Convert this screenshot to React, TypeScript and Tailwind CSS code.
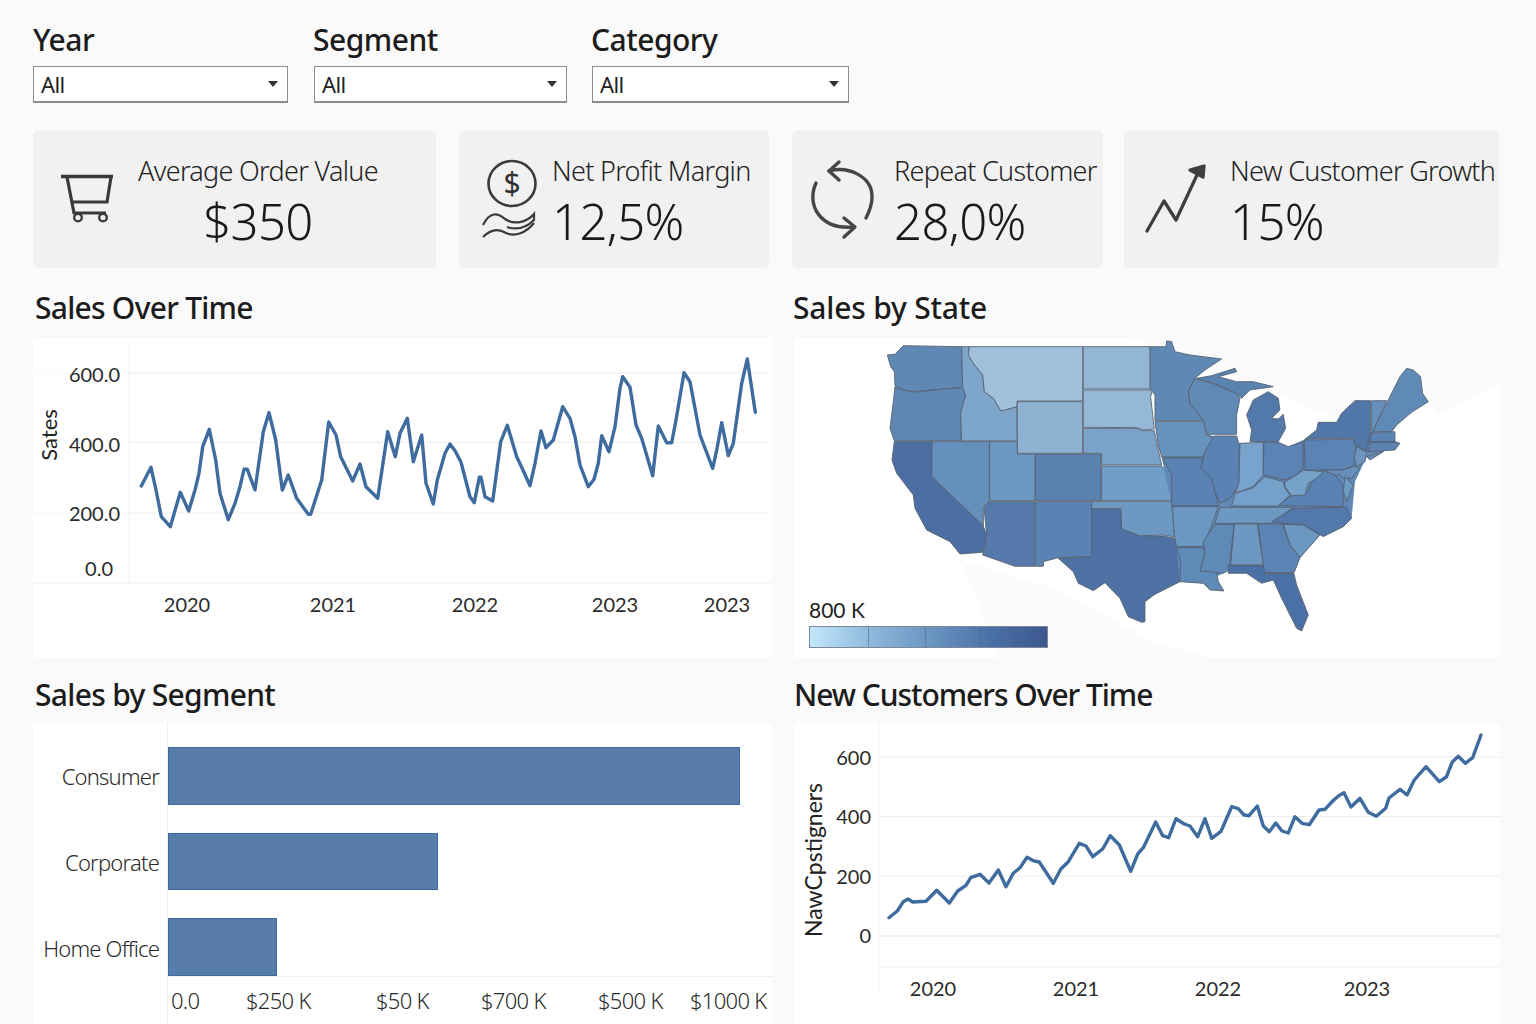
import React from "react";

const toPts = (raw: number[][], ox: number, oy: number) =>
  raw.map(([x, y]) => `${(x / 3 + ox).toFixed(1)},${(y / 3 + oy).toFixed(1)}`).join(" ");

const salesA = [[424,468],[453,412],[468,480],[484,560],[511,590],[541,487],[566,543],[585,480],[597,430],[608,350],[628,298],[647,390],[660,490],[685,569],[705,520],[720,470],[732,418],[742,418],[765,480],[790,305],[807,248],[827,330],[847,480],[865,435],[890,505],[925,553],[932,553],[965,450],[986,276],[1008,315],[1022,380],[1058,453],[1080,402],[1098,470],[1133,505],[1163,305],[1186,380]];
const salesB = [[0,310],[22,265],[40,395],[65,315],[78,460],[100,522],[112,450],[135,370],[150,342],[165,362],[183,397],[210,500],[223,518],[238,442],[243,442],[255,500],[278,513],[302,335],[322,286],[350,380],[365,412],[390,467],[405,400],[423,303],[438,353],[460,330],[488,230],[510,265],[525,320],[540,405],[565,470],[582,448],[595,400],[605,317],[627,365],[645,290],[660,175],[668,140],[690,172],[708,285],[725,325],[758,437],[775,288],[800,338],[815,338],[828,270],[852,128],[870,155],[900,315],[938,415],[950,360],[965,278],[985,377],[1000,340],[1025,160],[1042,87],[1066,247]];
const custA = [[297,593],[322,573],[340,545],[354,537],[368,546],[408,544],[440,511],[478,549],[503,513],[528,496],[542,473],[570,463],[597,489],[625,450],[648,500],[670,460],[690,443],[711,412],[732,423],[748,426],[790,490],[812,448],[835,425],[868,370],[888,378],[908,410],[938,387],[961,347],[988,375],[1022,454],[1043,402],[1060,383],[1097,306]];
const custB = [[38,347],[56,353],[78,296],[103,312],[120,318],[143,350],[165,296],[185,355],[213,334],[245,260],[265,266],[282,285],[297,287],[322,258],[340,318],[358,335],[377,309],[396,333],[415,339],[435,290],[456,310],[478,314],[507,270],[525,268],[548,243],[566,227],[582,218],[603,261],[630,235],[655,277],[679,289],[707,265],[717,234],[750,208],[771,225],[793,180],[828,140],[868,185],[889,171],[907,126],[925,109],[946,130],[968,113],[993,45]];

const westStates: [string, string][] = [
  ["#5f88b5","262,60 285,58 310,32 485,35 488,157 400,165 340,170 310,165 285,152 283,110 272,95"],
  ["#5f87b3","285,155 310,165 340,172 400,165 488,157 497,180 482,235 484,318 283,318 270,280 280,200"],
  ["#7ea5ca","485,35 508,35 505,60 520,85 548,120 553,170 580,190 603,228 650,215 652,318 485,318 482,235 497,180 488,157"],
  ["#a0c0dc","508,35 848,35 848,198 652,198 650,215 603,228 580,190 553,170 548,120 520,85 505,60"],
  ["#8fb2d3","652,200 848,200 848,355 652,355"],
  ["#93b6d5","850,35 1050,35 1058,162 850,162"],
  ["#95b8d6","850,165 1058,165 1052,185 1063,282 1030,285 1010,278 850,277"],
  ["#7ba3c9","850,280 1010,280 1030,287 1063,287 1085,390 905,390 905,355 850,355"],
  ["#719ec6","905,393 1085,393 1113,420 1113,497 905,497"],
  ["#5a82b0","706,357 903,357 903,497 706,497"],
  ["#6b97c0","568,320 652,320 652,357 705,357 705,497 568,497"],
  ["#6490bb","395,320 568,320 568,497 550,517 550,573 395,425"],
  ["#4b6fa3","283,320 395,320 395,425 550,573 560,600 548,652 480,657 450,620 380,585 345,520 340,480 290,415 276,375"],
  ["#5579aa","552,517 568,500 705,500 705,694 645,694 548,660 560,600"],
  ["#5a82b2","707,500 875,500 875,665 775,668 730,680 730,694 707,694"],
  ["#6c98c1","875,500 1115,500 1124,606 1090,600 1020,603 965,582 962,522 875,522"],
  ["#4e71a3","875,522 962,522 965,582 1020,603 1090,603 1124,610 1140,680 1140,740 1065,778 1035,800 1035,860 1025,862 985,845 960,790 915,743 880,767 835,745 820,710 775,670 875,665"],
];

const eastLand = "45,260 200,298 300,325 415,322 445,335 495,313 645,330 692,290 770,320 780,325 730,350 680,365 645,440 635,550 610,575 540,600 480,668 462,716 372,716 265,692 250,715 190,745 120,740 95,512 65,366";

const eastStates: [string, string][] = [
  ["#5f88b5","30,35 78,35 80,18 95,20 105,50 150,60 245,72 195,105 165,130 145,170 150,205 190,257 45,257 45,180 30,160"],
  ["#6792bd","45,260 192,260 200,300 222,310 195,350 190,366 65,366 55,330"],
  ["#5a82b2","68,369 190,369 183,400 215,430 225,470 235,512 95,512 95,420"],
  ["#6b98c2","97,515 235,515 215,570 190,635 110,635 103,600"],
  ["#5f8bb9","110,638 190,638 195,655 180,708 230,710 235,740 252,768 210,765 190,745 120,740 122,680"],
  ["#6089b4","165,130 220,145 290,175 300,190 290,240 290,298 200,298 190,255 150,205 145,170"],
  ["#5a83b0","170,130 215,122 285,100 290,110 235,125 290,140 340,140 400,155 330,165 305,190 290,175 220,145"],
  ["#5279aa","385,170 415,190 420,225 395,250 415,252 430,238 437,280 415,320 330,320 335,285 320,240 340,195"],
  ["#5a82b2","222,303 290,303 298,330 297,450 270,490 240,505 225,470 215,430 183,400 195,350"],
  ["#78a3cd","300,325 370,322 370,420 340,455 285,475 297,445"],
  ["#5b83b3","372,322 415,322 445,335 490,320 490,400 470,420 435,435 370,420"],
  ["#75a0c9","285,475 340,458 375,425 430,440 435,460 450,480 415,513 275,513"],
  ["#6d98c1","240,517 460,517 395,565 225,565"],
  ["#5279aa","460,520 620,517 635,550 610,575 550,605 490,570 430,565 395,560"],
  ["#5a82b2","415,512 450,485 505,470 515,440 550,405 585,420 610,450 610,515"],
  ["#76a2c9","435,455 435,440 470,420 490,405 550,410 530,430 505,445 495,480 455,482"],
  ["#6b97c1","430,568 490,570 540,600 480,668 450,630"],
  ["#5b83b3","355,567 428,567 450,630 480,668 462,713 372,713"],
  ["#6d98c2","283,567 352,567 370,690 272,690"],
  ["#5f8ab8","225,568 282,568 268,705 250,715 180,708 195,655 190,620"],
  ["#4b70a6","265,692 370,692 374,716 462,716 470,750 505,840 485,888 470,880 425,790 400,735 365,745 320,715 265,715"],
  ["#5b83b3","493,315 640,313 648,335 645,390 610,405 495,405"],
  ["#5177a9","645,197 692,197 692,290 680,350 645,330 640,310 495,313 530,285 535,262 590,262 605,235"],
  ["#6c96c0","650,335 680,352 675,380 650,395 643,370"],
  ["#6590bd","550,405 610,405 645,392 660,400 635,430 610,430 600,420 585,420"],
  ["#6e9ac4","615,425 640,450 620,500 610,470"],
  ["#6490bb","695,197 740,197 700,290 695,290"],
  ["#5f89b6","745,195 780,125 800,100 820,105 842,125 848,175 865,200 815,232 770,270 755,290 698,290"],
  ["#5b83b3","695,293 765,290 765,320 690,320"],
  ["#5b83b3","690,322 770,322 780,325 765,345 685,350"],
  ["#5f89b6","680,365 730,350 690,375"],
];

function Filter({ label, width, labelClass }: { label: string; width: string; labelClass?: string }) {
  return (
    <div className={width}>
      <div className={`h-[40px] text-[30px] font-medium leading-[40px] tracking-[-0.5px] text-[#1c1c1c] ${labelClass ?? ""}`}>{label}</div>
      <div className="mt-[6px] flex h-[37px] items-center justify-between border border-b-2 border-[#8c8c8c] bg-white pl-[7px] pr-[9px] text-[22px] leading-none tracking-[-0.6px] text-[#222]">
        <span>All</span>
        <span className="h-0 w-0 border-x-[5px] border-t-[6px] border-x-transparent border-t-[#333]" />
      </div>
    </div>
  );
}

function Kpi({ width, pad, gap, icon, label, value, center }: { width: string; pad: string; gap: string; icon: React.ReactNode; label: string; value: string; center?: boolean }) {
  return (
    <div className={`flex h-[138px] items-center rounded-[6px] bg-[#f1f1f1] ${width} ${pad} ${gap}`}>
      {icon}
      <div className={`mt-[6px] flex flex-col ${center ? "items-center" : "items-start"}`}>
        <div className="text-[27px] font-light leading-[34px] tracking-[-0.7px] whitespace-nowrap text-[#222]">{label}</div>
        <div className="mt-[4px] text-[49px] font-light leading-[58px] tracking-[-0.6px] text-[#1a1a1a]">{value}</div>
      </div>
    </div>
  );
}

function Section({ title, titleClass, top, children, panelHeight }: { title: string; titleClass: string; top: string; panelHeight: string; children: React.ReactNode }) {
  return (
    <section>
      <h2 className={`h-[40px] text-[30px] font-medium leading-[38px] whitespace-nowrap text-[#1c1c1c] ${top} ${titleClass}`}>{title}</h2>
      <div className={`relative overflow-hidden bg-white ${panelHeight}`}>{children}</div>
    </section>
  );
}

const tick = { fontFamily: "Lato, sans-serif", fontSize: 20, fill: "#2b2b2b" };

function SalesChart() {
  return (
    <svg viewBox="33 338 739 320" className="block h-full w-full">
      {[373, 513].map((y) => <line key={y} x1="33" x2="129" y1={y} y2={y} stroke="#f7f7f7" />)}
      {[373, 442.5, 513].map((y) => <line key={y} x1="129" x2="770" y1={y} y2={y} stroke="#eeeeee" />)}
      <line x1="33" x2="772" y1="583" y2="583" stroke="#eeeeee" />
      <line x1="129" x2="129" y1="345" y2="583" stroke="#f2f2f2" />
      {[["600.0", 120, 382], ["400.0", 120, 452], ["200.0", 120, 521], ["0.0", 113, 576]].map(([t, x, y]) => (
        <text key={t as string} x={x as number} y={y as number} textAnchor="end" style={tick}>{t}</text>
      ))}
      {[["2020", 187], ["2021", 333], ["2022", 475], ["2023", 615], ["2023", 727]].map(([t, x], i) => (
        <text key={i} x={x as number} y={612} textAnchor="middle" style={tick}>{t}</text>
      ))}
      <text transform="translate(57 435) rotate(-90)" textAnchor="middle" style={{ ...tick, fontSize: 22, fill: "#222" }}>Sates</text>
      <polyline points={`${toPts(salesA, 0, 330)} ${toPts(salesB, 400, 330)}`} fill="none" stroke="#3f6c9f" strokeWidth="3.4" strokeLinejoin="round" strokeLinecap="round" />
    </svg>
  );
}

function CustomersChart() {
  return (
    <svg viewBox="794 723 706 301" className="block h-full w-full">
      {[757, 816.5, 876, 967].map((y) => <line key={y} x1="879" x2="1500" y1={y} y2={y} stroke="#eeeeee" />)}
      <line x1="879" x2="1500" y1="936" y2="936" stroke="#f0f0f0" strokeWidth="2" />
      <line x1="879" x2="879" y1="723" y2="994" stroke="#f2f2f2" />
      {[["600", 765], ["400", 824], ["200", 884], ["0", 943]].map(([t, y]) => (
        <text key={t as string} x={871} y={y as number} textAnchor="end" style={tick}>{t}</text>
      ))}
      {[["2020", 933], ["2021", 1076], ["2022", 1218], ["2023", 1367]].map(([t, x]) => (
        <text key={t as string} x={x as number} y={996} textAnchor="middle" style={tick}>{t}</text>
      ))}
      <text transform="translate(822 860) rotate(-90)" textAnchor="middle" style={{ ...tick, fontSize: 23, fill: "#222" }}>NawCpstigners</text>
      <polyline points={`${toPts(custA, 790, 720)} ${toPts(custB, 1150, 720)}`} fill="none" stroke="#3f6c9f" strokeWidth="3.4" strokeLinejoin="round" strokeLinecap="round" />
    </svg>
  );
}

function UsMap() {
  const line = { stroke: "#565f6e", strokeWidth: 2.6, strokeLinejoin: "round" as const };
  return (
    <svg viewBox="794 338 706 320" className="block h-full w-full">
      <polygon points="1130,338 1500,338 1500,385 1440,415 1420,395 1340,420 1290,400 1230,375" fill="#fbfbfb" />
      <polygon points="960,560 1060,590 1150,640 1210,658 1000,658" fill="#fbfbfb" />
      <g transform="translate(800 335) scale(0.3333)">
        {westStates.map(([c, p], i) => <polygon key={i} points={p} fill={c} {...line} />)}
        <g transform="translate(1020 0)">
          <polygon points={eastLand} fill="#6189b6" />
          {eastStates.map(([c, p], i) => <polygon key={i} points={p} fill={c} {...line} />)}
        </g>
      </g>
    </svg>
  );
}

function CartIcon() {
  return (
    <svg viewBox="60 174 56 54" className="h-[54px] w-[56px] shrink-0" fill="none" stroke="#3a3a3a">
      <path d="M61 178.5H113" strokeWidth="3.4" />
      <path d="M67 179L74 215H106M111 179L107 204H71" strokeWidth="3.2" />
      <circle cx="78" cy="219.5" r="3.8" strokeWidth="2.4" />
      <circle cx="103" cy="219.5" r="3.8" strokeWidth="2.4" />
    </svg>
  );
}

function CoinIcon() {
  return (
    <svg viewBox="481 158 56 84" className="h-[84px] w-[56px] shrink-0" fill="none" stroke="#3a3a3a">
      <ellipse cx="512" cy="184.5" rx="23.5" ry="22.5" strokeWidth="2.6" />
      <text x="512" y="195" textAnchor="middle" stroke="none" fill="#333" style={{ fontFamily: "Noto Sans, sans-serif", fontSize: 30 }}>$</text>
      <path d="M483 226C490 212 498 214 505 220C514 226 526 224 534 215L534 221C526 229 516 231 507 228" strokeWidth="2.2" />
      <path d="M483 238C490 231 498 229 506 234C515 238 526 234 534 224" strokeWidth="2.2" />
    </svg>
  );
}

function RepeatIcon() {
  return (
    <svg viewBox="808 158 68 82" className="h-[82px] w-[68px] shrink-0" fill="none" stroke="#464646" strokeWidth="3.4" strokeLinecap="round" strokeLinejoin="round">
      <path d="M829 171C848 166 873 176 872 198C872 205 869 212 866 218" />
      <path d="M839 162L829 171L839 180" />
      <path d="M816 183C806 205 820 230 854 227" />
      <path d="M844 218L855 227L844 237" />
    </svg>
  );
}

function GrowthIcon() {
  return (
    <svg viewBox="1144 158 62 72" className="h-[72px] w-[62px] shrink-0" fill="none" stroke="#3f3f3f" strokeWidth="3.3" strokeLinecap="round" strokeLinejoin="round">
      <path d="M1147 226L1164 196L1176 215L1197 170" />
      <path d="M1190 165L1204 161L1203 172Z" fill="#3f3f3f" />
    </svg>
  );
}

function Bars() {
  const rows = [["Consumer", "w-[572px]"], ["Corporate", "w-[270px]"], ["Home Office", "w-[109px]"]];
  return (
    <div className="grid h-full grid-cols-[134px_1fr] text-[22px] tracking-[-0.8px] text-[#2a2a2a]">
      <div className="flex flex-col gap-[28px] pt-[24px] pr-[8px]">
        {rows.map(([label]) => (
          <div key={label} className="flex h-[58px] items-center justify-end font-light whitespace-nowrap">{label}</div>
        ))}
      </div>
      <div className="flex flex-col border-l border-[#f0f0f0]">
        <div className="flex h-[254px] flex-col gap-[28px] border-b border-[#efefef] pt-[24px]">
          {rows.map(([label, w]) => (
            <div key={label} className={`h-[58px] border border-[#3d6aa3] bg-[#587dab] ${w}`} />
          ))}
        </div>
        <div className="flex pt-[8px] text-[22px] font-light leading-[30px] tracking-[-0.7px] whitespace-nowrap">
          <span className="ml-[3px] w-[75px]">0.0</span>
          <span className="w-[130px]">$250 K</span>
          <span className="w-[105px]">$50 K</span>
          <span className="w-[117px]">$700 K</span>
          <span className="w-[92px]">$500 K</span>
          <span>$1000 K</span>
        </div>
      </div>
    </div>
  );
}

export default function App() {
  return (
    <div className="h-[1024px] w-[1536px] overflow-hidden bg-[#fafafa] px-[33px] pt-[20px] font-['Noto_Sans',sans-serif]">
      <div className="flex gap-[26px]">
        <Filter label="Year" width="w-[255px]" />
        <Filter label="Segment" width="w-[253px]" labelClass="-ml-[1px]" />
        <Filter label="Category" width="-ml-[1px] w-[257px]" labelClass="-ml-[1px]" />
      </div>

      <div className="mt-[27px] flex gap-[23px]">
        <Kpi width="w-[403px]" pad="pl-[27px]" gap="gap-[22px]" icon={<CartIcon />} label="Average Order Value" value="$350" center />
        <Kpi width="w-[310px]" pad="pl-[22px]" gap="gap-[15px]" icon={<CoinIcon />} label="Net Profit Margin" value="12,5%" />
        <div className="-mr-[2px] flex gap-[21px]">
          <Kpi width="w-[311px]" pad="pl-[16px]" gap="gap-[18px]" icon={<RepeatIcon />} label="Repeat Customer" value="28,0%" />
          <Kpi width="w-[375px]" pad="pl-[20px]" gap="gap-[24px]" icon={<GrowthIcon />} label="New Customer Growth" value="15%" />
        </div>
      </div>

      <div className="grid grid-cols-[739px_706px] gap-x-[22px]">
        <Section title="Sales Over Time" top="mt-[21px] mb-[9px]" titleClass="pl-[2px] tracking-[-0.75px]" panelHeight="h-[320px]"><SalesChart /></Section>
        <Section title="Sales by State" top="mt-[21px] mb-[9px]" titleClass="-ml-[1px] tracking-[-0.2px]" panelHeight="h-[320px]">
          <UsMap />
          <div className="absolute bottom-[10px] left-[15px]">
            <div className="font-['Lato',sans-serif] text-[21px] leading-[24px] text-[#222]">800 K</div>
            <div className="mt-[4px] flex h-[22px] w-[239px] border border-[#7d8796] bg-[linear-gradient(90deg,#c2e7fc_0%,#8fb9dc_25%,#6b96c2_50%,#4c72a8_75%,#3c578f_100%)]">
              <span className="w-[59px] border-r border-[#6f8aa8]" />
              <span className="w-[57px] border-r border-[#5f7da3]" />
              <span className="w-[55px] border-r border-[#4e6d9b]" />
            </div>
          </div>
        </Section>
        <Section title="Sales by Segment" top="mt-[18px] mb-[7px]" titleClass="pl-[2px] tracking-[-0.7px]" panelHeight="h-[301px]"><Bars /></Section>
        <Section title="New Customers Over Time" top="mt-[18px] mb-[7px]" titleClass="tracking-[-1.05px]" panelHeight="h-[301px]"><CustomersChart /></Section>
      </div>
    </div>
  );
}
